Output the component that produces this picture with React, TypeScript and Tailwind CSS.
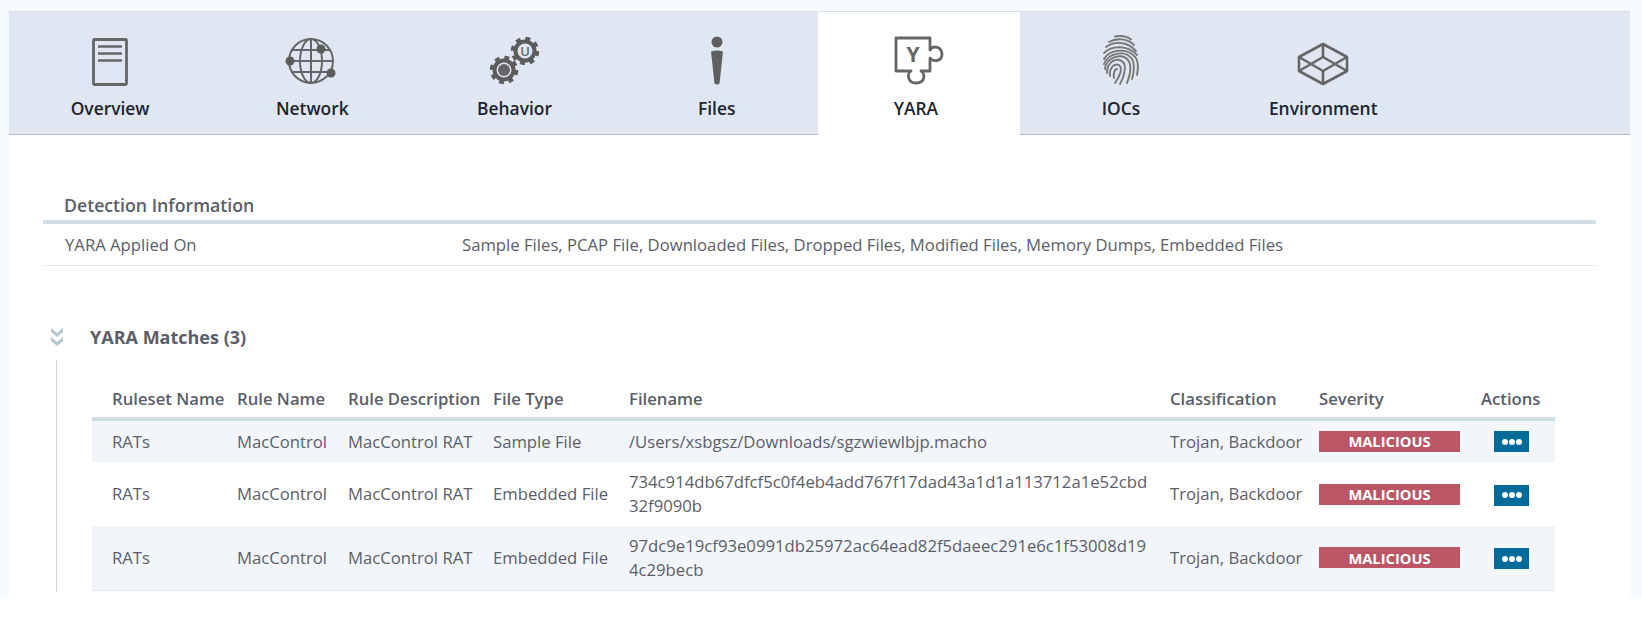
import type { ReactNode } from "react";

const font = "font-['Open_Sans','Noto_Sans',sans-serif]";

const DocIcon = () => (
  <svg width="36" height="48" viewBox="0 0 36 48" fill="none" stroke="#666" strokeWidth="2.800">
    <rect x="1.500" y="1.500" width="33" height="45" rx="1" />
    <path d="M6 8.500h24M6 15.500h24M6 22.500h24" strokeWidth="2.400" />
  </svg>
);

const GlobeIcon = () => (
  <svg width="52" height="50" viewBox="0 0 52 50" fill="none" stroke="#666" strokeWidth="2" className="-ml-[2px]">
    <circle cx="26" cy="25" r="22" />
    <ellipse cx="26" cy="25" rx="11" ry="22" />
    <path d="M26 3v44M6 14h40M4 25h44M6 36h40" />
    <g fill="#5c5c5c" stroke="none">
      <circle cx="36" cy="13" r="4.500" />
      <circle cx="5" cy="25" r="4.500" />
      <circle cx="46" cy="37" r="4.500" />
    </g>
  </svg>
);

const GearsIcon = () => (
  <svg width="50" height="50" viewBox="0 0 50 50" fill="none" className="-ml-[1px]">
    <circle cx="15" cy="34" r="9.500" stroke="#5c5c5c" strokeWidth="4" />
    <circle cx="15" cy="34" r="12.500" stroke="#5c5c5c" strokeWidth="3.500" strokeDasharray="4.900 4.920" />
    <circle cx="15" cy="34" r="6" fill="#666" />
    <circle cx="36" cy="15" r="9.500" stroke="#5c5c5c" strokeWidth="4" />
    <circle cx="36" cy="15" r="12.500" stroke="#5c5c5c" strokeWidth="3.500" strokeDasharray="4.900 4.920" />
    <text x="36" y="20" textAnchor="middle" fontSize="13" fontWeight="600" fill="#666" fontFamily="'Open Sans',sans-serif">
      U
    </text>
  </svg>
);

const InfoIcon = () => (
  <svg width="14" height="50" viewBox="0 0 14 50" fill="#5f5f5f">
    <circle cx="7" cy="6" r="5.500" />
    <path d="M1 15.500q6-2 12 0l-3.500 32q-2.500 2-5 0z" />
  </svg>
);

const PuzzleIcon = () => (
  <svg width="52" height="50" viewBox="0 0 52 50" fill="none" stroke="#666" strokeWidth="2.800" strokeLinejoin="round">
    <path d="M3 2h34v12c2-4 11-5 12 4 0 8-9 8-12 4v13h-9c4 2 5 12-5 12-9 0-9-10-5-12H3z" />
    <text x="20" y="26" textAnchor="middle" fontSize="21" fontWeight="700" fill="#666" stroke="none" fontFamily="'Open Sans',sans-serif">
      Y
    </text>
  </svg>
);

const FingerprintIcon = () => (
  <svg width="38" height="52" viewBox="0 0 38 52" fill="none" stroke="#777" strokeWidth="1.900" strokeLinecap="round">
    <path d="M13 2.500c6-1 12 0 16 3" />
    <path d="M7 8c7-4 18-4 25 3" />
    <path d="M4 13c8-6 21-6 30 4" />
    <path d="M2 19c8-8 24-8 33 2" />
    <path d="M2 25c6-10 24-12 32-1 3 5 2 12 1 17" />
    <path d="M2 30c5-12 22-14 28-5 3 5 2 13 0 20" />
    <path d="M3 35c1-11 16-17 23-9 4 5 2 15-1 23" />
    <path d="M5 39c0-12 10-16 16-11 4 4 1 15-3 22" />
    <path d="M8 42c-1-9 5-13 9-11 4 3 1 11-4 18" />
    <path d="M12 44c-1-5 1-9 3-9" />
  </svg>
);

const BoxIcon = () => (
  <svg width="52" height="44" viewBox="0 0 52 44" fill="none" stroke="#666" strokeWidth="2.600" strokeLinejoin="round">
    <path d="M26 2l24 13v14L26 42 2 29V15z" />
    <path d="M26 2v13M26 29v13M2 15l24 14 24-14M2 29l24-14 24 14" />
  </svg>
);

const tabs: { label: string; icon: ReactNode; active?: boolean }[] = [
  { label: "Overview", icon: <DocIcon /> },
  { label: "Network", icon: <GlobeIcon /> },
  { label: "Behavior", icon: <GearsIcon /> },
  { label: "Files", icon: <InfoIcon /> },
  { label: "YARA", icon: <PuzzleIcon />, active: true },
  { label: "IOCs", icon: <FingerprintIcon /> },
  { label: "Environment", icon: <BoxIcon /> },
];

const rows = [
  { type: "Sample File", file: "/Users/xsbgsz/Downloads/sgzwiewlbjp.macho", h: "h-[43px]", shade: true, btn: "" },
  { type: "Embedded File", file: "734c914db67dfcf5c0f4eb4add767f17dad43a1d1a113712a1e52cbd32f9090b", h: "h-[64px]", shade: false, btn: "mt-[2px]" },
  { type: "Embedded File", file: "97dc9e19cf93e0991db25972ac64ead82f5daeec291e6c1f53008d194c29becb", h: "h-[64px]", shade: true, btn: "mt-[2px]" },
];

const headers = ["Ruleset Name", "Rule Name", "Rule Description", "File Type", "Filename", "Classification", "Severity", "Actions"];

const App = () => {
  return (
    <div className={`h-[618px] w-full overflow-hidden bg-white ${font} text-[16.7px] text-[#5b5e68]`}>
      <div className="h-[597px] bg-[#f7fbff] pl-[9px] pr-[12px] pt-[11px]">
        <div className="h-[586px] border-t border-[#d8deea] bg-white">
          <div className="flex h-[123px] border-b border-[#b5b9c6] bg-[#e1e7f2]">
            {tabs.map((tab) => (
              <div
                key={tab.label}
                className={`flex h-[123px] w-[202.2px] flex-col items-center ${tab.active ? "bg-white" : ""}`}
              >
                <div className="flex h-[74px] items-end">{tab.icon}</div>
                <span className={`mt-[12px] text-[17.4px] font-semibold leading-5 text-[#20242f] ${tab.active ? "mr-[6px]" : ""}`}>
                  {tab.label}
                </span>
              </div>
            ))}
          </div>

          <div className="pl-[34px] pr-[34px] pt-[59px]">
            <div className="h-[30px] border-b-[4px] border-[#cfdde2] pl-[21px] text-[17.7px] font-semibold leading-[22px] text-[#5b5e68]">
              Detection Information
            </div>
            <div className="flex h-[42px] items-center border-b border-[#e3e8f0] pl-[22px]">
              <span className="w-[397px]">YARA Applied On</span>
              <span>Sample Files, PCAP File, Downloaded Files, Dropped Files, Modified Files, Memory Dumps, Embedded Files</span>
            </div>

            <div className="mt-[59px] flex h-[24px] items-center">
              <svg width="16" height="20" viewBox="0 0 16 20" fill="none" className="ml-[6px]">
                <path d="M2 1l6 5 6-5v4l-6 5-6-5z" fill="#b4c6d0" />
                <path d="M2 10l6 5 6-5v4l-6 5-6-5z" fill="#b4c6d0" />
              </svg>
              <span className="ml-[25px] text-[18px] font-bold text-[#5b5e68]">YARA Matches (3)</span>
            </div>

            <div className="ml-[13px] mt-[11px] h-[232px] border-l border-[#cdd7dd] pl-[35px] pt-[20px]">
              <table className="h-fit w-[1463px] table-fixed border-collapse">
                <colgroup>
                  <col className="w-[145px]" />
                  <col className="w-[111px]" />
                  <col className="w-[145px]" />
                  <col className="w-[136px]" />
                  <col className="w-[541px]" />
                  <col className="w-[149px]" />
                  <col className="w-[162px]" />
                  <col className="w-[74px]" />
                </colgroup>
                <thead>
                  <tr className="h-[39px] border-b-[4px] border-[#cfdde2]">
                    {headers.map((h, i) => (
                      <th key={h} className={`pt-[1px] text-left text-[16.7px] font-semibold whitespace-nowrap ${i === 0 ? "pl-[20px]" : ""}`}>
                        {h}
                      </th>
                    ))}
                  </tr>
                </thead>
                <tbody>
                  {rows.map((row) => (
                    <tr key={row.file} className={`${row.h} ${row.shade ? "bg-[#f2f6fa]" : ""} last:border-b last:border-[#e3e8f0]`}>
                      <td className="pl-[20px]">RATs</td>
                      <td className="whitespace-nowrap">MacControl</td>
                      <td className="whitespace-nowrap">MacControl RAT</td>
                      <td className="whitespace-nowrap">{row.type}</td>
                      <td className="pr-[20px] leading-[24px] break-all">{row.file}</td>
                      <td className="whitespace-nowrap">Trojan, Backdoor</td>
                      <td>
                        <div className="flex h-[21px] w-[141px] items-center justify-center bg-[#bb5667] text-[14.700px] font-bold text-white">
                          MALICIOUS
                        </div>
                      </td>
                      <td>
                        <button className={`ml-[13px] flex h-[21px] w-[35px] items-center justify-center gap-[1px] bg-[#006a98] ${row.btn}`}>
                          <span className="size-[6px] rounded-full bg-white" />
                          <span className="size-[6px] rounded-full bg-white" />
                          <span className="size-[6px] rounded-full bg-white" />
                        </button>
                      </td>
                    </tr>
                  ))}
                </tbody>
              </table>
            </div>
          </div>
        </div>
      </div>
    </div>
  );
};

export default App;
